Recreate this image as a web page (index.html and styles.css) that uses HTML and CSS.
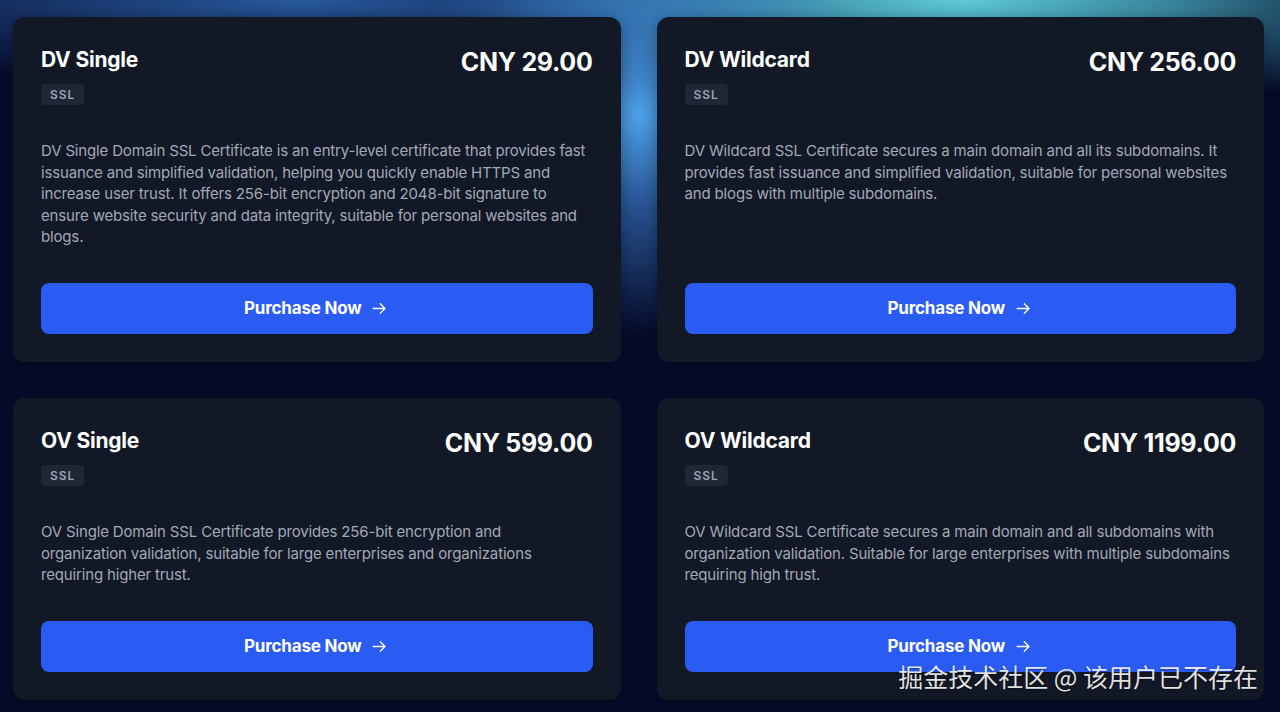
FILE: index.html
```html
<!DOCTYPE html>
<html lang="en">

<head>
  <meta charset="UTF-8" />
  <title>SSL Certificates</title>
  <meta name="viewport" content="width=device-width, initial-scale=1.0">
  <link rel="stylesheet" href="styles.css">
</head>

<body>
  <main class="plans">
    <div class="plan">
      <div class="plan-head">
        <div>
          <h3 class="plan-name">DV Single</h3>
          <span class="tag">SSL</span>
        </div>
        <div class="price">CNY 29.00</div>
      </div>
      <p class="desc">DV Single Domain SSL Certificate is an entry-level certificate that provides fast issuance and simplified validation, helping you quickly enable HTTPS and increase user trust. It offers 256-bit encryption and 2048-bit signature to ensure website security and data integrity, suitable for personal websites and blogs.</p>
      <button class="buy">Purchase Now
        <svg viewBox="0 0 24 24" width="19" height="19"><path d="M4 12h15M13 6l6 6-6 6" /></svg>
      </button>
    </div>

    <div class="plan">
      <div class="plan-head">
        <div>
          <h3 class="plan-name">DV Wildcard</h3>
          <span class="tag">SSL</span>
        </div>
        <div class="price">CNY 256.00</div>
      </div>
      <p class="desc">DV Wildcard SSL Certificate secures a main domain and all its subdomains. It provides fast issuance and simplified validation, suitable for personal websites and blogs with multiple subdomains.</p>
      <button class="buy">Purchase Now
        <svg viewBox="0 0 24 24" width="19" height="19"><path d="M4 12h15M13 6l6 6-6 6" /></svg>
      </button>
    </div>

    <div class="plan">
      <div class="plan-head">
        <div>
          <h3 class="plan-name">OV Single</h3>
          <span class="tag">SSL</span>
        </div>
        <div class="price">CNY 599.00</div>
      </div>
      <p class="desc">OV Single Domain SSL Certificate provides 256-bit encryption and organization validation, suitable for large enterprises and organizations requiring higher trust.</p>
      <button class="buy">Purchase Now
        <svg viewBox="0 0 24 24" width="19" height="19"><path d="M4 12h15M13 6l6 6-6 6" /></svg>
      </button>
    </div>

    <div class="plan">
      <div class="plan-head">
        <div>
          <h3 class="plan-name">OV Wildcard</h3>
          <span class="tag">SSL</span>
        </div>
        <div class="price">CNY 1199.00</div>
      </div>
      <p class="desc">OV Wildcard SSL Certificate secures a main domain and all subdomains with organization validation. Suitable for large enterprises with multiple subdomains requiring high trust.</p>
      <button class="buy">Purchase Now
        <svg viewBox="0 0 24 24" width="19" height="19"><path d="M4 12h15M13 6l6 6-6 6" /></svg>
      </button>
    </div>
  </main>

  <div class="watermark">掘金技术社区 @ 该用户已不存在</div>
</body>

</html>
```

FILE: styles.css
```css
html,
body {
  height: 100%;
}

body {
  margin: 0;
  overflow: hidden;
  font-family: Inter, 'Noto Sans', sans-serif;
  color: #fff;
  background:
    radial-gradient(ellipse 240px 220px at 640px 115px, #4ea3ea 0%, rgba(64, 136, 222, 0.6) 40%, rgba(6, 11, 42, 0) 100%),
    radial-gradient(ellipse 480px 120px at 960px 0, #5ecadb 0%, rgba(72, 172, 192, 0.75) 45%, rgba(6, 11, 42, 0) 100%),
    radial-gradient(ellipse 540px 90px at 300px 0, #28599e 0%, rgba(32, 72, 134, 0.65) 50%, rgba(6, 11, 42, 0) 100%),
    #060b2a;
}

.plans {
  display: grid;
  grid-template-columns: 1fr 1fr;
  gap: 36px;
  padding: 17px 16px 0 13px;
}

.plan {
  background: #121825;
  border-radius: 12px;
  padding: 28px;
  display: flex;
  flex-direction: column;
  box-shadow: 0 4px 18px rgba(0, 0, 0, 0.35);
}

.plan-head {
  display: flex;
  justify-content: space-between;
  align-items: flex-start;
}

.plan-name {
  margin: 0 0 9px 0;
  font-size: 21px;
  line-height: 30px;
  font-weight: 700;
  letter-spacing: -0.2px;
}

.tag {
  display: inline-block;
  vertical-align: top;
  background: #1f2734;
  color: #9aa3b2;
  font-size: 12px;
  font-weight: 600;
  letter-spacing: 1px;
  line-height: 21px;
  padding: 0 9px;
  border-radius: 4px;
}

.price {
  font-size: 25px;
  line-height: 34px;
  font-weight: 700;
  letter-spacing: -0.3px;
}

.desc {
  margin: 35px 4px 35px 0;
  color: #a2a9b6;
  font-size: 15px;
  line-height: 21.6px;
  letter-spacing: -0.16px;
  flex: 1;
}

.buy {
  height: 51px;
  border: none;
  border-radius: 8px;
  background: #2a5bf2;
  color: #fff;
  font-family: inherit;
  font-size: 17px;
  font-weight: 700;
  letter-spacing: -0.2px;
  display: flex;
  align-items: center;
  justify-content: center;
  gap: 9px;
}

.buy svg {
  fill: none;
  stroke: #fff;
  stroke-width: 1.6;
  stroke-linecap: round;
  stroke-linejoin: round;
}

.watermark {
  position: absolute;
  right: 22px;
  bottom: 21px;
  font-family: 'Noto Sans CJK SC', sans-serif;
  font-size: 25px;
  line-height: 30px;
  color: rgba(255, 255, 255, 0.88);
  text-shadow: 0 1px 2px rgba(0, 0, 0, 0.4);
}
```
